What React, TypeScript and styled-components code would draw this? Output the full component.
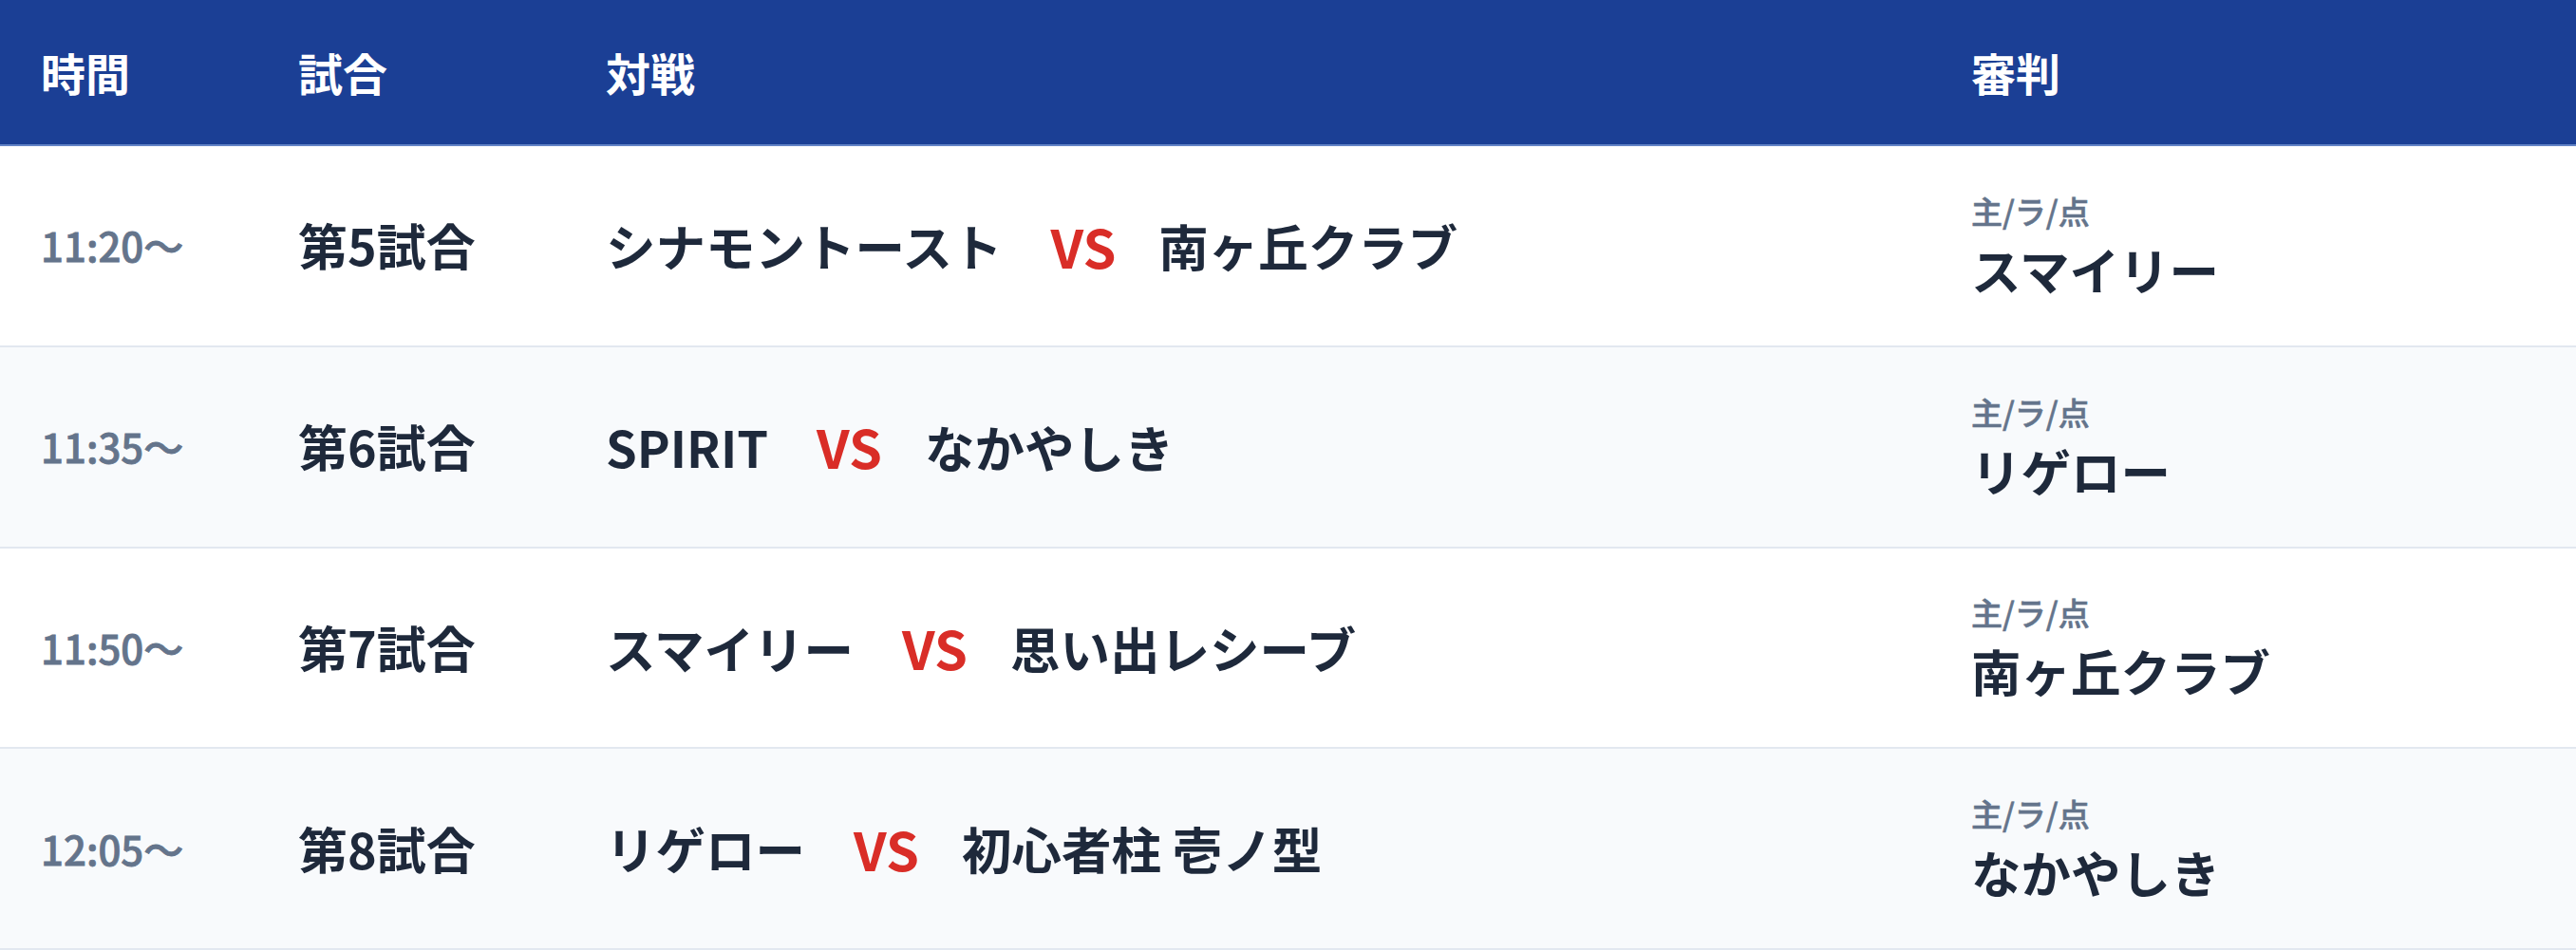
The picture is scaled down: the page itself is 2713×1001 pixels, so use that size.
import React from "react";
import styled, { createGlobalStyle } from "styled-components";

const GlobalStyle = createGlobalStyle`
  html, body {
    margin: 0;
    padding: 0;
    background: #ffffff;
  }
  body {
    font-family: "Noto Sans CJK JP", "Noto Sans", sans-serif;
    color: #1e293b;
  }
`;

const Table = styled.div`
  width: 2713px;
  display: flex;
  flex-direction: column;
`;

const cols = "271px 324px 1438px 1fr";

const HeaderRow = styled.div`
  display: grid;
  grid-template-columns: ${cols};
  align-items: center;
  box-sizing: border-box;
  height: 154px;
  padding-left: 43px;
  background: #1b3f95;
  border-bottom: 2px solid #6384c6;
`;

const HeaderCell = styled.div`
  font-size: 47px;
  font-weight: 700;
  color: #ffffff;
  line-height: 1.2;
  white-space: nowrap;
`;

const Row = styled.div<{ $alt: boolean }>`
  display: grid;
  grid-template-columns: ${cols};
  align-items: center;
  box-sizing: border-box;
  height: 211.75px;
  padding-left: 43px;
  background: ${(p) => (p.$alt ? "#f8fafc" : "#ffffff")};
  border-bottom: 2px solid #e2e8f0;
`;

const TimeCell = styled.div`
  font-size: 42px;
  font-weight: 500;
  color: #64748b;
  -webkit-text-stroke: 0.8px #64748b;
  line-height: 1.4;
  white-space: nowrap;
`;

const GameCell = styled.div`
  font-size: 52px;
  font-weight: 700;
  color: #1e293b;
  line-height: 1.4;
  white-space: nowrap;
`;

const Matchup = styled.div`
  display: flex;
  align-items: center;
  gap: 48px;
  white-space: nowrap;
`;

const Team = styled.span`
  font-size: 52.5px;
  font-weight: 700;
  color: #1e293b;
  line-height: 1.4;
`;

const Versus = styled.span`
  font-size: 56px;
  font-weight: 700;
  color: #d92d27;
  line-height: 1.4;
  margin: 0 -3px 0 3px;
`;

const RefereeCell = styled.div`
  display: flex;
  flex-direction: column;
  padding-top: 4px;
  white-space: nowrap;
`;

const RefLabel = styled.span`
  font-size: 33px;
  font-weight: 500;
  color: #64748b;
  -webkit-text-stroke: 0.6px #64748b;
  line-height: 44px;
`;

const RefName = styled.span`
  font-size: 52.5px;
  font-weight: 700;
  color: #1e293b;
  line-height: 78px;
`;

type Match = {
  time: string;
  game: string;
  home: string;
  away: string;
  referee: string;
};

const matches: Match[] = [
  { time: "11:20〜", game: "第5試合", home: "シナモントースト", away: "南ヶ丘クラブ", referee: "スマイリー" },
  { time: "11:35〜", game: "第6試合", home: "SPIRIT", away: "なかやしき", referee: "リゲロー" },
  { time: "11:50〜", game: "第7試合", home: "スマイリー", away: "思い出レシーブ", referee: "南ヶ丘クラブ" },
  { time: "12:05〜", game: "第8試合", home: "リゲロー", away: "初心者柱 壱ノ型", referee: "なかやしき" },
];

export default function App() {
  return (
    <>
      <GlobalStyle />
      <Table>
        <HeaderRow>
          <HeaderCell>時間</HeaderCell>
          <HeaderCell>試合</HeaderCell>
          <HeaderCell>対戦</HeaderCell>
          <HeaderCell>審判</HeaderCell>
        </HeaderRow>
        {matches.map((m, i) => (
          <Row key={m.game} $alt={i % 2 === 1}>
            <TimeCell>{m.time}</TimeCell>
            <GameCell>{m.game}</GameCell>
            <Matchup>
              <Team>{m.home}</Team>
              <Versus>VS</Versus>
              <Team>{m.away}</Team>
            </Matchup>
            <RefereeCell>
              <RefLabel>主/ラ/点</RefLabel>
              <RefName>{m.referee}</RefName>
            </RefereeCell>
          </Row>
        ))}
      </Table>
    </>
  );
}
